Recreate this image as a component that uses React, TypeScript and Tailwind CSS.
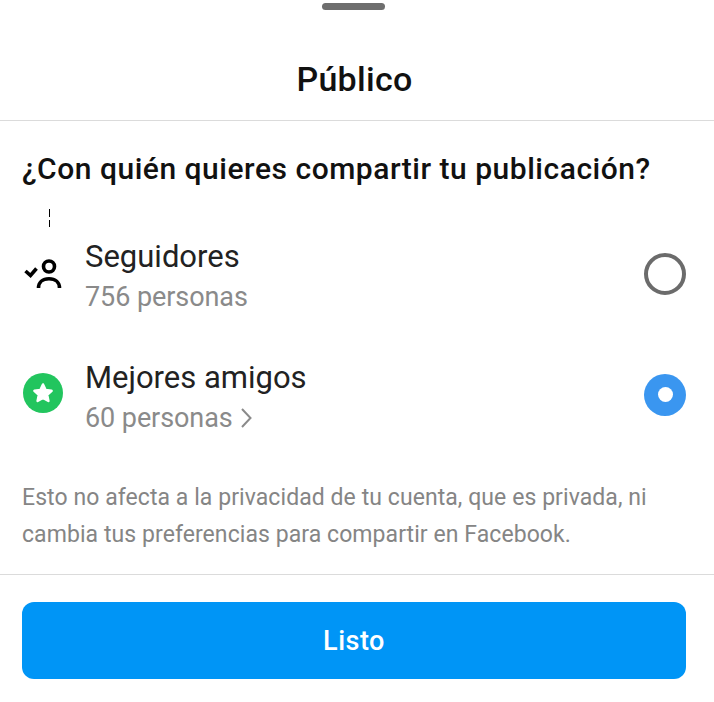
import React from "react";

function Radio({ on }: { on: boolean }) {
  return on ? (
    <div className="w-[42px] h-[42px] -mt-[6px] rounded-full bg-[#3a96f0] flex items-center justify-center">
      <div className="w-[15px] h-[15px] rounded-full bg-white" />
    </div>
  ) : (
    <div className="w-[42px] h-[42px] -mt-[6px] rounded-full border-[4px] border-[#6b6b6b]" />
  );
}

export default function App() {
  return (
    <div className="w-[714px] h-[702px] bg-white text-black overflow-hidden font-['Roboto',sans-serif]">
      <div className="h-[121px] border-b border-[#dbdbdb] relative flex items-center justify-center pt-[37px] pr-[5px]">
        <div className="absolute top-[3px] left-[322px] w-[63px] h-[7px] rounded-full bg-[#6e6e6e]" />
        <div className="text-[34px] leading-[40px] font-medium tracking-[0.3px] text-[#111]">Público</div>
      </div>
      <div className="pl-[22px] pt-[29px] text-[30px] leading-[38px] font-medium tracking-[0.52px] whitespace-nowrap text-[#111]">¿Con quién quieres compartir tu publicación?</div>
      <div className="relative h-[28px]">
        <div className="absolute left-[49px] top-[21px] h-[8px] w-px bg-black" />
        <div className="absolute left-[49px] top-[32px] h-[7px] w-px bg-black" />
      </div>
      <div className="h-[121px] pl-[22px] pr-[28px] flex items-center">
        <svg className="-mt-[6px]" width="42" height="42" viewBox="0 0 42 42" fill="none" stroke="#000" strokeWidth="3.6">
          <circle cx="27" cy="13.500" r="5.500" />
          <path d="M16.500 35c0-5.500 4-9.200 10.500-9.200s10.500 3.700 10.500 9.200" />
          <path d="M3.500 18l5 4.500 6-7" />
        </svg>
        <div className="ml-[21px] flex-1">
          <div className="text-[31px] leading-[40px] text-[#222]">Seguidores</div>
          <div className="text-[27px] leading-[40px] tracking-[-0.08px] text-[#8a8a8a]">756 personas</div>
        </div>
        <Radio on={false} />
      </div>
      <div className="h-[121px] pl-[22px] pr-[28px] flex items-center">
        <div className="w-[40px] h-[40px] ml-px -mt-[9px] mr-px rounded-full bg-[#22c55e] flex items-center justify-center">
          <svg width="24" height="24" viewBox="0 0 24 24" fill="white" stroke="white" strokeWidth="2.500" strokeLinejoin="round"><path d="M12 3.500l2.600 5.600 6 .7-4.400 4.100 1.200 6L12 17l-5.400 2.900 1.200-6L3.400 9.800l6-.7z" /></svg>
        </div>
        <div className="ml-[21px] flex-1">
          <div className="text-[31px] leading-[40px] text-[#222]">Mejores amigos</div>
          <div className="text-[27px] leading-[40px] tracking-[-0.08px] text-[#8a8a8a] flex items-center">60 personas
            <svg className="ml-[6px]" width="14" height="22" viewBox="0 0 14 22" fill="none" stroke="#8a8a8a" strokeWidth="2"><path d="M3 2l8.500 9-8.500 9" /></svg>
          </div>
        </div>
        <Radio on={true} />
      </div>
      <div className="pl-[22px] pr-[28px] pt-[21px] text-[23px] leading-[37px] tracking-[0.07px] text-[#858585] h-[116px]">
        Esto no afecta a la privacidad de tu cuenta, que es privada, ni cambia tus preferencias para compartir en Facebook.
      </div>
      <div className="border-t border-[#dbdbdb] pl-[22px] pr-[28px] pt-[27px]">
        <div className="h-[77px] pt-px rounded-[12px] bg-[#0095f6] text-white text-[27px] tracking-[0.5px] font-medium flex items-center justify-center">Listo</div>
      </div>
    </div>
  );
}
